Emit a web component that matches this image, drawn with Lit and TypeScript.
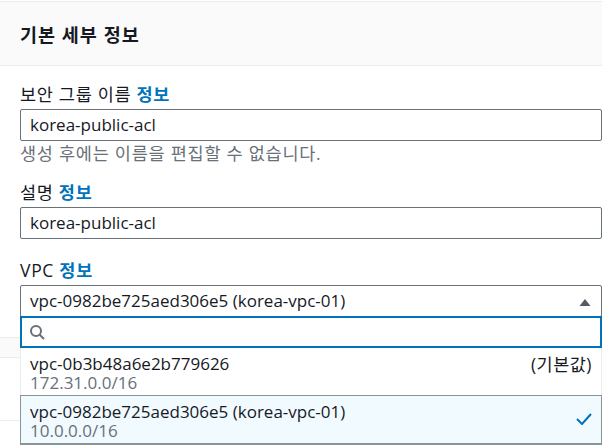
import { LitElement, html, css } from "lit";
import { customElement } from "lit/decorators.js";

@customElement("app-root")
export class AppRoot extends LitElement {
  static styles = css`
    :host {
      display: block;
      position: relative;
      width: 602px;
      height: 446px;
      overflow: hidden;
      background: #fff;
      font-family: "Open Sans", "Noto Sans CJK KR", sans-serif;
      font-size: 17px;
      color: #16191f;
    }
    .head {
      margin-top: 1px;
      height: 63px;
      background: #fafafa;
      border-top: 1px solid #eaeded;
      border-bottom: 1px solid #eaeded;
      display: flex;
      align-items: center;
      padding-left: 20px;
      font-size: 18.5px;
      font-weight: 700;
      letter-spacing: 1px;
    }
    .form {
      padding: 17px 0 0 20px;
      display: flex;
      flex-direction: column;
      gap: 20px;
    }
    .label { line-height: 22px; margin-bottom: 4px; font-size: 17.5px; letter-spacing: 0.7px; }
    .label a { color: #0073bb; font-weight: 700; }
    .input {
      box-sizing: border-box;
      width: 582px;
      height: 32px;
      border: 1px solid #687078;
      border-radius: 2px;
      padding: 0 9px;
      display: flex;
      align-items: center;
      justify-content: space-between;
      background: #fff;
      line-height: 22px;
    }
    .arrow { margin: 2px 1px 0 0; }
    .hint { color: #687078; font-size: 17.5px; letter-spacing: 0.75px; line-height: 24px; height: 20px; }
    .behind {
      position: absolute;
      left: 0;
      right: 0;
      top: 337px;
      height: 19px;
      background: #fafafa;
      border-top: 1px solid #eaeded;
      border-bottom: 1px solid #eaeded;
    }
    .behind2 {
      position: absolute;
      left: 0;
      right: 0;
      top: 420px;
      border-top: 1px solid #eaeded;
    }
    .menu {
      position: absolute;
      left: 20px;
      top: 316px;
      width: 582px;
      box-sizing: border-box;
      background: #fff;
    }
    .search {
      box-sizing: border-box;
      height: 32px;
      border: 2px solid #0073bb;
      display: flex;
      align-items: center;
      padding-left: 7px;
    }
    .opt {
      box-sizing: border-box;
      height: 47px;
      padding: 5px 9px;
      display: flex;
      justify-content: space-between;
      line-height: 22px;
      border-left: 1px solid #eaeded;
      border-right: 1px solid #eaeded;
    }
    .opt small { display: block; font-size: 17px; color: #687078; line-height: 16px; }
    .opt.sel {
      height: 50px;
      background: #f1faff;
      border: 1px solid #879596;
      border-bottom-width: 2px;
      padding: 5px 9px;
    }
    .opt.sel small { line-height: 15px; }
    .right { font-size: 17.5px; letter-spacing: 0.5px; }
    .check { margin: 12px 0 0 0; }
  `;
  render() {
    return html`
      <div class="head">기본 세부 정보</div>
      <div class="form">
        <div>
          <div class="label">보안 그룹 이름 <a>정보</a></div>
          <div class="input">korea-public-acl</div>
          <div class="hint">생성 후에는 이름을 편집할 수 없습니다.</div>
        </div>
        <div>
          <div class="label">설명 <a>정보</a></div>
          <div class="input">korea-public-acl</div>
        </div>
        <div>
          <div class="label">VPC <a>정보</a></div>
          <div class="input">
            <span>vpc-0982be725aed306e5 (korea-vpc-01)</span>
            <svg class="arrow" width="12" height="7" viewBox="0 0 12 7"><path d="M6 0 L11.5 7 H0.5 Z" fill="#545b64"/></svg>
          </div>
        </div>
      </div>
      <div class="behind"></div>
      <div class="behind2"></div>
      <div class="menu">
        <div class="search">
          <svg width="16" height="16" viewBox="0 0 16 16" fill="none" stroke="#687078" stroke-width="2"><circle cx="7" cy="7" r="5"/><path d="M10.5 10.5 L15 15"/></svg>
        </div>
        <div class="opt">
          <div>vpc-0b3b48a6e2b779626<small>172.31.0.0/16</small></div>
          <div class="right">(기본값)</div>
        </div>
        <div class="opt sel">
          <div>vpc-0982be725aed306e5 (korea-vpc-01)<small>10.0.0.0/16</small></div>
          <svg class="check" width="16" height="12" viewBox="0 0 16 12" fill="none" stroke="#0073bb" stroke-width="2"><path d="M1 6 L6 11 L15 1"/></svg>
        </div>
      </div>
    `;
  }
}
